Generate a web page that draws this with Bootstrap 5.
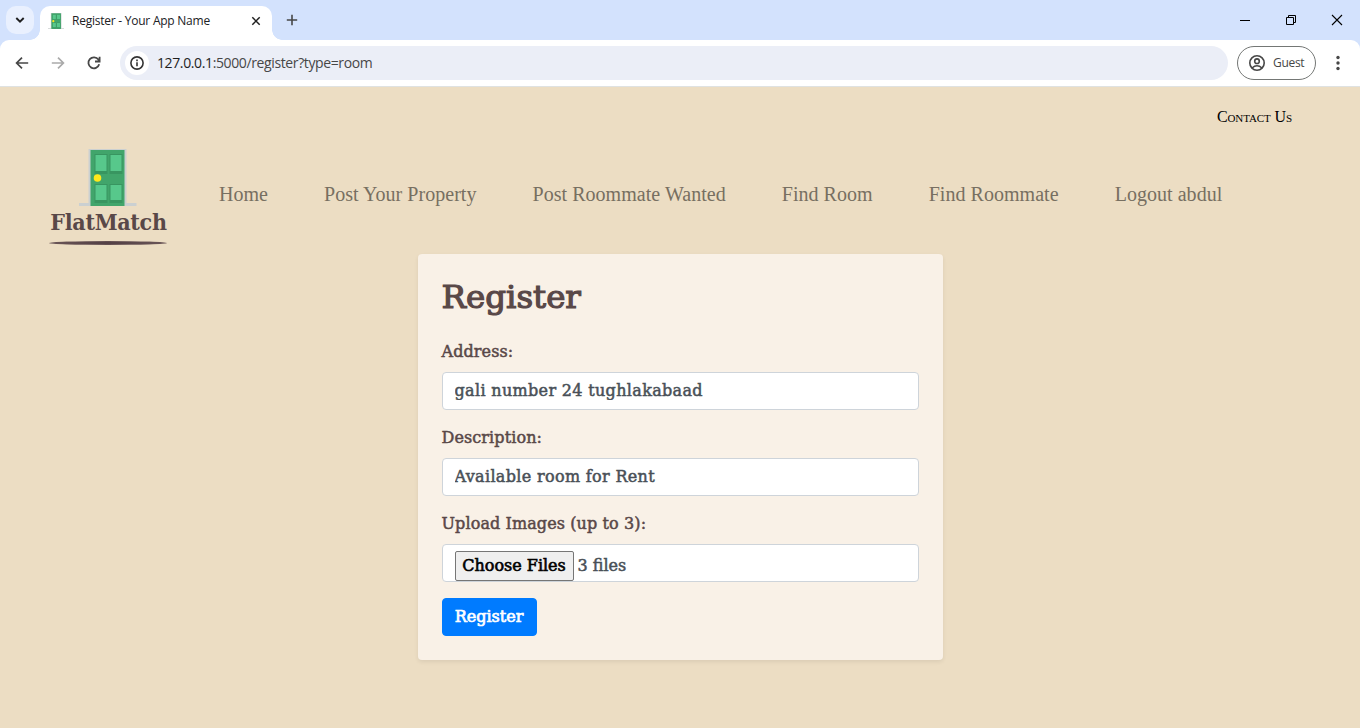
<!DOCTYPE html>
<html lang="en">
<head>
<meta charset="utf-8">
<title>Register - Your App Name</title>
<meta name="viewport" content="width=device-width, initial-scale=1">
<link href="https://cdn.jsdelivr.net/npm/bootstrap@5.3.0/dist/css/bootstrap.min.css" rel="stylesheet">
<style>
body{width:1360px;height:728px;overflow:hidden;background:#ecddc3;font-family:"DejaVu Serif",serif}
svg{display:block;flex:none}
.chrome{font-family:"Open Sans","Noto Sans",sans-serif;color:#202124}
.tabstrip{height:40px;background:#d3e2fd;padding-left:6px}
.tab-search{width:28px;height:28px;margin-top:6px;border-radius:10px;background:#e9f0fe}
.tab-active{position:relative;width:232px;height:34px;margin:6px 0 0 6px;padding:0 10px 4px 8px;background:#fff;border-radius:10px 10px 0 0;font-size:12px}
.tab-active::before,.tab-active::after{content:"";position:absolute;bottom:0;width:10px;height:10px}
.tab-active::before{left:-10px;background:radial-gradient(circle at 0 0,#0000 9.5px,#fff 10px)}
.tab-active::after{right:-10px;background:radial-gradient(circle at 100% 0,#0000 9.5px,#fff 10px)}
.tab-title{letter-spacing:-.24px}
.window-keys{padding-right:17px;gap:35px}
.toolbar-shell{height:47px;background:#d3e2fd}
.toolbar{height:47px;background:#fff;border-bottom:1px solid #dfe2e2;border-radius:9px 9px 0 0;padding:0 14px}
.omnibox{width:1108px;height:34px;margin-left:18px;border-radius:17px;background:#ebeef7;padding-left:5px;font-size:14px;color:#474747}
.site-info{width:24px;height:24px;border-radius:50%;background:#fff}
.url{margin:-1px 0 0 8px;letter-spacing:-.38px}
.url b{font-weight:400;color:#1f1f1f}
.guest{width:79px;height:34px;margin-left:9px;border:1px solid #747775;border-radius:17px;font-size:12px;letter-spacing:-.3px;color:#474747;padding-left:11px;gap:8px}
.contact{height:60px;padding:19px 68px 0 0;font-family:"Liberation Serif",serif;font-variant:small-caps;font-size:16px;letter-spacing:-.1px;line-height:21px;color:#000}
.site-nav{height:107px;padding-left:50px}
.brand{width:117px;height:98px;margin-top:2px}
.brand-name{font-family:"DejaVu Serif Condensed","DejaVu Serif",serif;font-weight:700;font-size:23px;letter-spacing:-.3px;line-height:29px;height:30px;color:#594848;white-space:nowrap}
.brand-rule{width:118px;height:4px;margin:4px 1px 0 0;border-radius:50%;background:radial-gradient(ellipse,#4d3a40,#695456 65%,#a99584)}
.menu{margin:30px 0 0 52px;gap:56px;font-family:"Liberation Serif",serif;font-size:20px;letter-spacing:.04px;line-height:34px}
.menu a{color:#776f61;text-decoration:none;white-space:nowrap}
.panel{width:525px;height:406px;padding:24px;background:#f9f1e7;border-radius:4px;box-shadow:0 2px 4px rgba(0,0,0,.075);color:#594848;-webkit-text-stroke:.5px}
.panel h1{font-size:32.5px;line-height:38px;height:43px;margin:0 0 19px;font-weight:400;-webkit-text-stroke:1.2px}
.panel label{display:block;font-size:16px;letter-spacing:.1px;line-height:24px;margin-bottom:8px;white-space:nowrap}
.panel .form-control{height:38px;padding:6px 12px;border:1px solid #ced4da;border-radius:4px;background:#fff;color:#495057;font-size:16px;line-height:24px;-webkit-text-stroke:.5px}
.panel input.form-control{letter-spacing:.33px;padding-bottom:7px;padding-top:5px}
.field{margin-bottom:16px}
.choose{width:119px;height:30px;padding:0;border:1px solid #767676;border-radius:2px;background:#efefef;color:#000;white-space:nowrap;-webkit-text-stroke:.6px}
.file-count{margin:3px 0 0 4px;height:24px}
.panel .btn-primary{width:95px;height:38px;padding:0;background:#007bff;border-color:#007bff;border-radius:4px;font-weight:400;font-size:16px;-webkit-text-stroke:.7px}
</style>
</head>
<body>
<header class="chrome">
 <div class="tabstrip d-flex">
  <div class="tab-search d-flex align-items-center justify-content-center"><svg width="10" height="8" viewBox="0 0 10 8" fill="none" stroke="#1f1f1f" stroke-width="1.9"><path d="M1.3 2 5 5.700 8.700 2"/></svg></div>
  <div class="tab-active d-flex align-items-center">
   <svg width="16" height="16" viewBox="0 0 57 57" preserveAspectRatio="none"><use href="#door"/></svg>
   <span class="tab-title ms-2">Register - Your App Name</span>
   <svg class="ms-auto" width="12" height="12" viewBox="0 0 12 12" stroke="#1f1f1f" stroke-width="1.5"><path d="m2.3 2.3 7.4 7.4m0-7.4L2.3 9.7"/></svg>
  </div>
  <svg style="margin:14px 0 0 14px" width="12" height="12" viewBox="0 0 12 12" stroke="#474747" stroke-width="1.6"><path d="M6 .8v10.4M.8 6h10.4"/></svg>
  <div class="window-keys d-flex align-items-center ms-auto">
   <svg width="12" height="12" viewBox="0 0 12 12"><path d="M1 6h10v1H1z"/></svg>
   <svg width="10" height="10" viewBox="0 0 10 10" fill="none" stroke="#000"><path d="M.5 2.5h7v7h-7zM2.5 2V.5h7v7H8"/></svg>
   <svg width="12" height="12" viewBox="0 0 12 12" stroke="#000" stroke-width="1.1"><path d="m1 1 10 10m0-10L1 11"/></svg>
  </div>
 </div>
 <div class="toolbar-shell"><div class="toolbar d-flex align-items-center">
  <svg width="16" height="16" viewBox="0 0 16 16" fill="none" stroke="#474747" stroke-width="1.7"><path d="M14.2 8H3m5-5.4L2.6 8 8 13.4"/></svg>
  <svg style="margin-left:20px" width="16" height="16" viewBox="0 0 16 16" fill="none" stroke="#aaa" stroke-width="1.7"><path d="M1.8 8H13M8 2.6 13.4 8 8 13.4"/></svg>
  <svg style="margin-left:20px" width="16" height="16" viewBox="0 0 16 16" fill="none" stroke="#474747" stroke-width="1.8"><path d="M13.2 9.3A5.5 5.5 0 1 1 12.4 4.6L13.5 6M13.6 1.8v4.7H9"/></svg>
  <div class="omnibox d-flex align-items-center">
   <div class="site-info d-flex align-items-center justify-content-center"><svg width="14" height="14" viewBox="0 0 14 14"><circle cx="7" cy="7" r="6.1" fill="none" stroke="#333" stroke-width="1.6"/><path d="M6.2 6.2h1.6v4H6.2zM6.2 3.6h1.6v1.6H6.2z" fill="#333"/></svg></div>
   <span class="url"><b>127.0.0.1</b>:5000/register?type=room</span>
  </div>
  <div class="guest d-flex align-items-center">
   <svg width="16" height="16" viewBox="0 0 16 16" fill="none" stroke="#474747" stroke-width="1.6"><circle cx="8" cy="8" r="7.2"/><circle cx="8" cy="6.2" r="2.3"/><path d="M3 13q5-4.5 10 0"/></svg><span>Guest</span>
  </div>
  <svg class="ms-auto" style="margin-right:6px" width="4" height="16" viewBox="0 0 4 16" fill="#474747"><circle cx="2" cy="2.5" r="1.7"/><circle cx="2" cy="8" r="1.7"/><circle cx="2" cy="13.5" r="1.7"/></svg>
 </div></div>
</header>
<main>
 <div class="contact d-flex justify-content-end"><span>Contact Us</span></div>
 <nav class="site-nav d-flex">
  <div class="brand d-flex flex-column align-items-center">
   <svg width="58" height="58" viewBox="0.5 0 58 58" style="margin-right:1px">
    <g id="door"><path d="M0 54h10V0h38v54h10v3H0z" fill="#cbd0d1"/><path d="M12 1h34v56H12z" fill="#41a56b"/><path d="M16 5h13v20H16zM31 5h13v20H31zM16 35h13v19H16zM31 35h13v19H31z" fill="#389560"/><path d="M17 6h11v16H17zM32 6h11v16H32zM17 36h11v15H17zM32 36h11v15H32z" fill="#57c88b"/><circle cx="19" cy="29" r="3.8" fill="#ffe81c"/></g>
   </svg>
   <div class="brand-name">FlatMatch</div>
   <div class="brand-rule"></div>
  </div>
  <div class="menu d-flex"><a href="#">Home</a><a href="#">Post Your Property</a><a href="#">Post Roommate Wanted</a><a href="#">Find Room</a><a href="#">Find Roommate</a><a href="#">Logout abdul</a></div>
 </nav>
 <form class="panel mx-auto">
  <h1>Register</h1>
  <div class="field"><label for="address">Address:</label><input id="address" class="form-control" value="gali number 24 tughlakabaad"></div>
  <div class="field"><label for="description">Description:</label><input id="description" class="form-control" value="Available room for Rent"></div>
  <div class="field"><label>Upload Images (up to 3):</label><div class="form-control d-flex"><button type="button" class="choose">Choose Files</button><span class="file-count">3 files</span></div></div>
  <button type="button" class="btn btn-primary">Register</button>
 </form>
</main>
<script src="https://cdn.jsdelivr.net/npm/bootstrap@5.3.0/dist/js/bootstrap.bundle.min.js"></script>
</body>
</html>
